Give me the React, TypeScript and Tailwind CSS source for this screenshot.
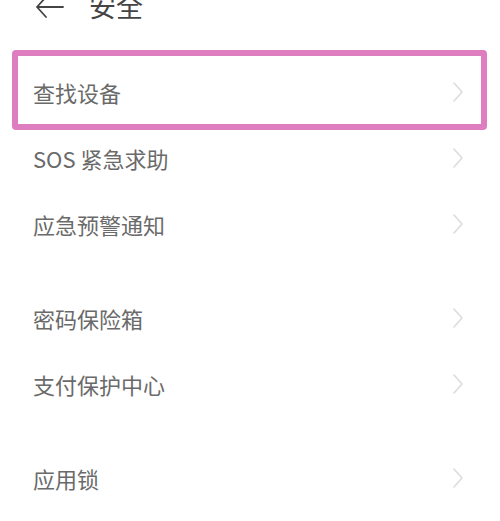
import React from "react";

const font = { fontFamily: '"Noto Sans CJK SC", "Noto Sans", sans-serif' };

function Chevron() {
  return (
    <svg width="12" height="22" viewBox="0 0 12 22" className="shrink-0">
      <path d="M2 2 L10 11 L2 20" fill="none" stroke="#dcdcdc" strokeWidth="1.6" strokeLinecap="round" strokeLinejoin="round" />
    </svg>
  );
}

function Row({ label, highlight }: { label: string; highlight?: boolean }) {
  return (
    <div className="relative flex h-[66px] items-center justify-between pb-[5px] pl-[33px] pr-[36px]">
      {highlight && (
        <div className="pointer-events-none absolute left-[12px] right-[13px] top-[-11px] bottom-[-3px] rounded-[4px] border-[6px] border-[#df7dc1]" />
      )}
      <span className="text-[22px] leading-none text-[#6a6a6a]">{label}</span>
      <Chevron />
    </div>
  );
}

export default function App() {
  return (
    <div className="h-[521px] w-[500px] overflow-hidden bg-white" style={font}>
      <div className="mt-[-5px] flex h-[24px] items-center pl-[34px]">
        <svg width="30" height="24" viewBox="0 0 30 24" className="shrink-0">
          <path d="M3 12 H29 M12 2 L3 12 L12 22" fill="none" stroke="#444444" strokeWidth="1.8" strokeLinecap="round" strokeLinejoin="round" />
        </svg>
        <span className="relative top-[-2px] ml-[25px] text-[27px] leading-none text-[#444444]">安全</span>
      </div>
      <div className="mt-[42px]">
        <Row label="查找设备" highlight />
        <Row label="SOS 紧急求助" />
        <Row label="应急预警通知" />
      </div>
      <div className="mt-[28px]">
        <Row label="密码保险箱" />
        <Row label="支付保护中心" />
      </div>
      <div className="mt-[28px]">
        <Row label="应用锁" />
      </div>
    </div>
  );
}
